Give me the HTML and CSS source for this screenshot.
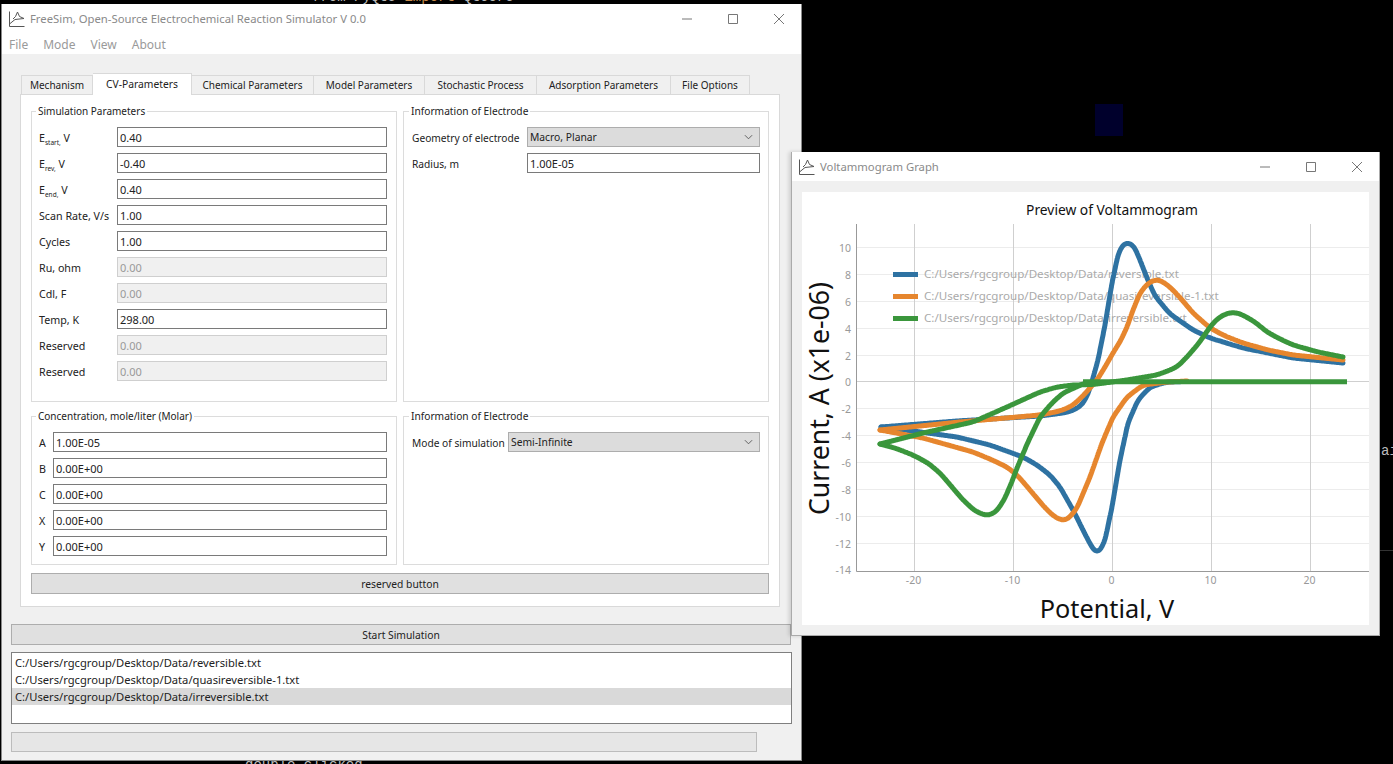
FILE: index.html
```html
<!DOCTYPE html>
<html>
<head>
  <meta charset="utf-8">
  <title>FreeSim</title>
  <link rel="stylesheet" href="styles.css">
</head>
<body>
  <div class="bg_code">from PyQt5 <span class="bg_orange">import</span> QtCore</div>
  <div class="bg_blue"></div>
  <div class="bg_side">ai</div>
  <div class="bg_line"></div>
  <div class="bg_bottom">double-clicked</div>

  <div class="window main_window">
    <div class="titlebar">
      <svg class="app_icon" viewBox="0 0 16 16"><path d="M0.5 0.5V15.5H15.5M0.5 13L6 8.5L15 7.5L10.5 5.5L8.5 1L6.5 5.5L4 8"/></svg>
      <span class="title_text">FreeSim, Open-Source Electrochemical Reaction Simulator V 0.0</span>
      <div class="win_controls">
        <svg viewBox="0 0 10 10"><path d="M0 5H10"/></svg>
        <svg viewBox="0 0 10 10"><path d="M0.5 0.5H9.5V9.5H0.5Z"/></svg>
        <svg viewBox="0 0 10 10"><path d="M0 0L10 10M10 0L0 10"/></svg>
      </div>
    </div>
    <div class="menubar">
      <span>File</span><span>Mode</span><span>View</span><span>About</span>
    </div>
    <div class="main_body">
      <div class="tabs">
        <div class="tab">Mechanism</div>
        <div class="tab active">CV-Parameters</div>
        <div class="tab">Chemical Parameters</div>
        <div class="tab">Model Parameters</div>
        <div class="tab">Stochastic Process</div>
        <div class="tab">Adsorption Parameters</div>
        <div class="tab">File Options</div>
      </div>
      <div class="tab_pane">
        <div class="group_grid">
          <fieldset class="group">
            <legend>Simulation Parameters</legend>
            <div class="row"><label class="lbl_sim">E<sub>start,</sub> V</label><div class="field">0.40</div></div>
            <div class="row"><label class="lbl_sim">E<sub>rev,</sub> V</label><div class="field">-0.40</div></div>
            <div class="row"><label class="lbl_sim">E<sub>end,</sub> V</label><div class="field">0.40</div></div>
            <div class="row"><label class="lbl_sim">Scan Rate, V/s</label><div class="field">1.00</div></div>
            <div class="row"><label class="lbl_sim">Cycles</label><div class="field">1.00</div></div>
            <div class="row"><label class="lbl_sim">Ru, ohm</label><div class="field off">0.00</div></div>
            <div class="row"><label class="lbl_sim">Cdl, F</label><div class="field off">0.00</div></div>
            <div class="row"><label class="lbl_sim">Temp, K</label><div class="field">298.00</div></div>
            <div class="row"><label class="lbl_sim">Reserved</label><div class="field off">0.00</div></div>
            <div class="row"><label class="lbl_sim">Reserved</label><div class="field off">0.00</div></div>
          </fieldset>
          <fieldset class="group group_right">
            <legend>Information of Electrode</legend>
            <div class="row"><label class="lbl_geo">Geometry of electrode</label><div class="combo"><span>Macro, Planar</span><svg viewBox="0 0 10 6"><path d="M1 1L5 5L9 1"/></svg></div></div>
            <div class="row"><label class="lbl_geo">Radius, m</label><div class="field">1.00E-05</div></div>
          </fieldset>
          <fieldset class="group">
            <legend>Concentration, mole/liter (Molar)</legend>
            <div class="row"><label class="lbl_conc">A</label><div class="field">1.00E-05</div></div>
            <div class="row"><label class="lbl_conc">B</label><div class="field">0.00E+00</div></div>
            <div class="row"><label class="lbl_conc">C</label><div class="field">0.00E+00</div></div>
            <div class="row"><label class="lbl_conc">X</label><div class="field">0.00E+00</div></div>
            <div class="row"><label class="lbl_conc">Y</label><div class="field">0.00E+00</div></div>
          </fieldset>
          <fieldset class="group group_right">
            <legend>Information of Electrode</legend>
            <div class="row"><label class="lbl_mode">Mode of simulation</label><div class="combo"><span>Semi-Infinite</span><svg viewBox="0 0 10 6"><path d="M1 1L5 5L9 1"/></svg></div></div>
          </fieldset>
        </div>
        <div class="button reserved_btn">reserved button</div>
      </div>
      <div class="button start_btn">Start Simulation</div>
      <div class="file_list">
        <div class="file_item">C:/Users/rgcgroup/Desktop/Data/reversible.txt</div>
        <div class="file_item">C:/Users/rgcgroup/Desktop/Data/quasireversible-1.txt</div>
        <div class="file_item selected">C:/Users/rgcgroup/Desktop/Data/irreversible.txt</div>
      </div>
      <div class="progress"></div>
    </div>
  </div>

  <div class="window graph_window">
    <div class="titlebar graph_titlebar">
      <svg class="app_icon" viewBox="0 0 16 16"><path d="M0.5 0.5V15.5H15.5M0.5 13L6 8.5L15 7.5L10.5 5.5L8.5 1L6.5 5.5L4 8"/></svg>
      <span class="title_text">Voltammogram Graph</span>
      <div class="win_controls">
        <svg viewBox="0 0 10 10"><path d="M0 5H10"/></svg>
        <svg viewBox="0 0 10 10"><path d="M0.5 0.5H9.5V9.5H0.5Z"/></svg>
        <svg viewBox="0 0 10 10"><path d="M0 0L10 10M10 0L0 10"/></svg>
      </div>
    </div>
    <div class="graph_body">
      <svg class="chart" id="chart" viewBox="802 192 567 433">
        <g class="grid_h">
          <path d="M856 247.5H1369M856 274.5H1369M856 301.5H1369M856 328.5H1369M856 355.5H1369M856 408.5H1369M856 435.5H1369M856 462.5H1369M856 489.5H1369M856 516.5H1369M856 543.5H1369"/>
        </g>
        <path class="grid_v" d="M914.5 224V571M1013.5 224V571M1112.5 224V571M1211.5 224V571M1310.5 224V571"/>
        <path class="grid_v" d="M856 381.5H1369"/>
        <path class="axis" d="M856.5 224V571.5H1369"/>
        <g class="tick_y">
          <text x="851" y="251.5">10</text><text x="851" y="278.5">8</text><text x="851" y="305.5">6</text>
          <text x="851" y="332.5">4</text><text x="851" y="359.5">2</text><text x="851" y="385.5">0</text>
          <text x="851" y="412.5">-2</text><text x="851" y="439.5">-4</text><text x="851" y="466.5">-6</text>
          <text x="851" y="493.5">-8</text><text x="851" y="520.5">-10</text><text x="851" y="547.5">-12</text>
          <text x="851" y="573.5">-14</text>
        </g>
        <g class="tick_x">
          <text x="913.5" y="584">-20</text><text x="1012.5" y="584">-10</text><text x="1111.5" y="584">0</text>
          <text x="1210.5" y="584">10</text><text x="1309.5" y="584">20</text>
        </g>
        <g class="legend_text">
          <text x="924" y="278">C:/Users/rgcgroup/Desktop/Data/reversible.txt</text>
          <text x="924" y="300">C:/Users/rgcgroup/Desktop/Data/quasireversible-1.txt</text>
          <text x="924" y="322">C:/Users/rgcgroup/Desktop/Data/irreversible.txt</text>
        </g>
        <path class="legend_line c_blue" d="M893 274.5H918"/>
        <path class="legend_line c_orange" d="M893 296.5H918"/>
        <path class="legend_line c_green" d="M893 318.5H918"/>
        <g id="curves"></g>
        <text class="chart_title" x="1112" y="215">Preview of Voltammogram</text>
        <text class="chart_label label_x" x="1107" y="618">Potential, V</text>
        <text class="chart_label label_y" transform="translate(829 398.5) rotate(-90)">Current, A (x1e-06)</text>
      </svg>
    </div>
  </div>
  <script src="chart.js"></script>
</body>
</html>
```

FILE: styles.css
```css
html, body {
  margin: 0;
  height: 100%;
  overflow: hidden;
}
body {
  background-color: #000;
  font-family: "Noto Sans", sans-serif;
  font-size: 10.7px;
  color: #222;
  position: relative;
}

/* leftovers of the desktop behind the windows */
.bg_code, .bg_side, .bg_bottom {
  position: absolute;
  font-family: "Liberation Mono", monospace;
  font-size: 14px;
  line-height: 16px;
  color: #bbb;
  white-space: pre;
}
.bg_code {
  left: 312px;
  top: -11px;
}
.bg_orange {
  color: #c88a4a;
}
.bg_side {
  left: 1381px;
  top: 443px;
}
.bg_bottom {
  left: 245px;
  top: 757px;
}
.bg_blue {
  position: absolute;
  left: 1095px;
  top: 104px;
  width: 28px;
  height: 32px;
  background-color: #00002c;
}
.bg_line {
  position: absolute;
  left: 1380px;
  top: 550px;
  width: 13px;
  height: 1px;
  background-color: #333;
}

/* windows */
.window {
  position: absolute;
  box-sizing: border-box;
  background-color: #f0f0f0;
  border: 1px solid #8a8a8a;
  border-top: 0;
}
.main_window {
  left: 1px;
  top: 4px;
  width: 801px;
  height: 757px;
}
.graph_window {
  left: 791px;
  top: 152px;
  width: 589px;
  height: 484px;
  border-color: #aaa;
  box-shadow: -2px 0 4px rgba(0, 0, 0, 0.15);
}
.titlebar {
  display: flex;
  align-items: center;
  height: 29px;
  padding-left: 7px;
  background-color: #fff;
}
.app_icon {
  width: 16px;
  height: 16px;
  margin-right: 5px;
  fill: none;
  stroke: #555;
  stroke-width: 1;
}
.title_text {
  font-size: 11.3px;
  color: #8a8a8a;
}
.win_controls {
  margin-left: auto;
  display: flex;
  gap: 36px;
  padding-right: 17px;
}
.win_controls svg {
  width: 10px;
  height: 10px;
  fill: none;
  stroke: #777;
  stroke-width: 1;
}
.menubar {
  box-sizing: border-box;
  display: flex;
  height: 21px;
  align-items: center;
  padding: 2px 0 0 7px;
  gap: 15px;
  background-color: #fff;
  font-size: 12px;
  color: #9a9a9a;
}

/* main window content */
.main_body {
  padding: 19px 9px 0 9px;
}
.tabs {
  display: grid;
  grid-template-columns: 72px 99px 122px 111px 112px 134px 79px;
  margin-left: 10px;
  height: 21px;
  align-items: end;
  font-size: 10px;
  text-align: center;
  position: relative;
}
.tab {
  box-sizing: border-box;
  height: 19px;
  line-height: 18px;
  background-color: #f0f0f0;
  border: 1px solid #d9d9d9;
  border-left: 0;
  border-bottom: 0;
  white-space: nowrap;
}
.tab:first-child {
  border-left: 1px solid #d9d9d9;
}
.tab.active {
  height: 22px;
  line-height: 20px;
  font-size: 10.3px;
  background-color: #fff;
  margin-bottom: -1px;
  position: relative;
}
.tab_pane {
  box-sizing: border-box;
  width: 760px;
  height: 513px;
  margin-left: 9px;
  padding: 9px 10px;
  background-color: #fff;
  border: 1px solid #d9d9d9;
}
.group_grid {
  display: grid;
  grid-template-columns: 366px 366px;
  grid-template-rows: 298px 156px;
  gap: 7px 6px;
}
.group {
  box-sizing: border-box;
  min-width: 0;
  margin: 0;
  padding: 9px 9px 0 7px;
  border: 1px solid #dcdcdc;
}
.group_right {
  padding: 9px 8px 0 8px;
  font-size: 10.2px;
}
.group legend {
  padding: 0 2px;
  margin-left: -3px;
  line-height: 14px;
  font-size: 10px;
}
.group_right legend {
  font-size: 10.2px;
}
.row {
  display: flex;
  height: 20px;
  margin-bottom: 6px;
  align-items: center;
}
.row label {
  flex: none;
  padding-top: 1px;
  white-space: nowrap;
}
.row sub {
  font-size: 6.5px;
  line-height: 0;
}
.lbl_sim { width: 78px; }
.lbl_geo { width: 115px; }
.lbl_conc { width: 14px; }
.lbl_mode { width: 96px; }
.field, .combo {
  box-sizing: border-box;
  flex: 1;
  height: 20px;
  line-height: 19px;
  padding: 0 2px;
  background-color: #fff;
  border: 1px solid #7a7a7a;
  font-size: 11px;
}
.field.off {
  background-color: #f0f0f0;
  border-color: #cfcfcf;
  color: #999;
}
.combo {
  display: flex;
  align-items: center;
  justify-content: space-between;
  background-color: #dcdcdc;
  border-color: #adadad;
  font-size: 10.3px;
}
.combo svg {
  width: 9px;
  height: 6px;
  margin-right: 4px;
  fill: none;
  stroke: #555;
  stroke-width: 1;
}
.button {
  box-sizing: border-box;
  height: 21px;
  line-height: 20px;
  text-align: center;
  background-color: #e0e0e0;
  border: 1px solid #adadad;
  font-size: 10.3px;
}
.reserved_btn {
  margin-top: 8px;
}
.start_btn {
  width: 780px;
  margin-top: 17px;
}
.file_list {
  box-sizing: border-box;
  width: 781px;
  height: 72px;
  margin-top: 7px;
  padding-top: 1px;
  background-color: #fff;
  border: 1px solid #7f7f7f;
  font-size: 11.2px;
}
.file_item {
  height: 17px;
  line-height: 17px;
  padding-left: 3px;
}
.file_item.selected {
  background-color: #d9d9d9;
}
.progress {
  box-sizing: border-box;
  width: 746px;
  height: 20px;
  margin-top: 8px;
  background-color: #e6e6e6;
  border: 1px solid #bcbcbc;
}

/* graph window content */
.graph_body {
  box-sizing: border-box;
  height: 454px;
  padding: 11px 10px 10px 10px;
}
.chart {
  display: block;
  width: 567px;
  height: 433px;
  background-color: #fff;
}
.grid_h path {
  fill: none;
  stroke: #ececec;
  stroke-width: 1;
}
.grid_v {
  fill: none;
  stroke: #cfcfcf;
  stroke-width: 1;
}
.axis {
  fill: none;
  stroke: #999;
  stroke-width: 1;
}
.tick_y text {
  font-size: 10.5px;
  fill: #999;
  text-anchor: end;
}
.tick_x text {
  font-size: 10.5px;
  fill: #999;
  text-anchor: middle;
}
.legend_text text {
  font-size: 11.6px;
  fill: #aaa;
}
.legend_line {
  fill: none;
  stroke-width: 5;
}
.c_blue { stroke: #2e72a2; }
.c_orange { stroke: #e6862e; }
.c_green { stroke: #3a963c; }
.curve {
  fill: none;
  stroke-width: 5;
  stroke-linejoin: round;
  stroke-linecap: round;
}
.curve_flat {
  fill: none;
  stroke-width: 5;
}
.chart_title {
  font-size: 13.8px;
  fill: #111;
  text-anchor: middle;
}
.chart_label {
  fill: #111;
  text-anchor: middle;
}
.label_x {
  font-size: 25.3px;
}
.label_y {
  font-size: 26.6px;
}
```

FILE: chart.js
```js
// traced curves, in screen px of the chart viewBox
var curves = [
  {cls: "c_blue", runs: [
    [[1187,381.5],[1167,382],[1150,387],[1138,400],[1128,423],[1120,460],[1112,507],[1105,540],[1101,549],[1097,553],[1093,549],[1087,538],[1073,510],[1060,487],[1050,475],[1037,465],[1023,457],[990,445],[957,437],[913,431],[881,427]],
    [[881,427],[957,421],[1040,416],[1063,413],[1072,411],[1082,405],[1088,394],[1093,378],[1098,360],[1105,325],[1112,283],[1118,255],[1123,244],[1128,242],[1134,246],[1140,260],[1147,278],[1155,296],[1170,314],[1193,330],[1210,338],[1243,348],[1293,358],[1343,363]]
  ]},
  {cls: "c_orange", runs: [
    [[1187,381],[1167,382],[1143,385],[1127,397],[1113,417],[1102,443],[1090,477],[1077,508],[1070,517],[1065,521],[1058,519],[1050,513],[1040,502],[1030,490],[1018,476],[1007,467],[990,459],[973,452],[923,438],[880,430]],
    [[880,430],[960,422],[1040,415],[1060,411],[1072,406],[1082,397],[1090,388],[1097,380],[1105,367],[1113,353],[1121,340],[1127,327],[1133,310],[1140,293],[1148,283],[1157,279],[1165,283],[1173,290],[1183,301],[1193,313],[1210,328],[1225,336],[1243,343],[1268,350],[1293,355],[1343,360]]
  ]},
  {cls: "c_green", runs: [
    [[1083,384],[1063,393],[1052,403],[1040,417],[1028,442],[1017,468],[1011,484],[1004,500],[996,512],[987,516],[975,511],[963,500],[952,487],[940,473],[928,463],[913,455],[895,448],[880,444]],
    [[880,444],[923,433],[973,422],[1007,407],[1040,392],[1057,387],[1073,385],[1093,384.5],[1127,380],[1157,375],[1170,370],[1177,367],[1187,357],[1199,343],[1210,327],[1217,319],[1225,314],[1233,312],[1241,314],[1255,322],[1267,332],[1280,339],[1293,345],[1318,352],[1343,357]]
  ]}
];

// evenly spaced samples along the traced polyline
function resample(pts) {
  var out = [];
  for (var i = 0; i < pts.length - 1; i++) {
    var dx = pts[i + 1][0] - pts[i][0];
    var dy = pts[i + 1][1] - pts[i][1];
    var n = Math.max(1, Math.round(Math.sqrt(dx * dx + dy * dy)));
    for (var k = 0; k < n; k++) {
      out.push([pts[i][0] + dx * k / n, pts[i][1] + dy * k / n]);
    }
  }
  out.push(pts[pts.length - 1]);
  return out;
}

// moving average, window shrinks near the ends so they stay put
function smooth(pts, radius) {
  return pts.map(function (p, i) {
    var r = Math.min(radius, i, pts.length - 1 - i);
    var x = 0, y = 0;
    for (var k = i - r; k <= i + r; k++) {
      x += pts[k][0];
      y += pts[k][1];
    }
    return [x / (2 * r + 1), y / (2 * r + 1)];
  });
}

function toPath(pts) {
  return "M" + pts.map(function (p) {
    return p[0].toFixed(1) + " " + p[1].toFixed(1);
  }).join("L");
}

var holder = document.getElementById("curves");
curves.forEach(function (curve) {
  curve.runs.forEach(function (run) {
    var pts = smooth(smooth(resample(run), 4), 4);
    var path = document.createElementNS("http://www.w3.org/2000/svg", "path");
    path.setAttribute("class", "curve " + curve.cls);
    path.setAttribute("d", toPath(pts));
    holder.appendChild(path);
  });
});
var flat = document.createElementNS("http://www.w3.org/2000/svg", "path");
flat.setAttribute("class", "curve_flat c_green");
flat.setAttribute("d", "M1083 381.7H1347");
holder.appendChild(flat);
```
